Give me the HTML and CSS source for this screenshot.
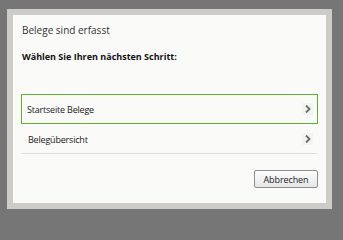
FILE: index.html
```html
<!DOCTYPE html>
<html lang="de">
<head>
<meta charset="utf-8">
<link rel="stylesheet" href="styles.css">
</head>
<body>
<div class="frame">
  <div class="dialog">
    <div class="title">Belege sind erfasst</div>
    <div class="prompt">Wählen Sie Ihren nächsten Schritt:</div>
    <div class="options">
      <div class="option selected">
        <span>Startseite Belege</span>
        <span class="chev"><svg width="6" height="8" viewBox="0 0 6 8"><path d="M1 0.5 L4.5 4 L1 7.5" fill="none" stroke="#6a6a6a" stroke-width="1.8"/></svg></span>
      </div>
      <div class="option last">
        <span>Belegübersicht</span>
        <span class="chev"><svg width="6" height="8" viewBox="0 0 6 8"><path d="M1 0.5 L4.5 4 L1 7.5" fill="none" stroke="#6a6a6a" stroke-width="1.8"/></svg></span>
      </div>
    </div>
    <div class="actions">
      <button class="btn">Abbrechen</button>
    </div>
  </div>
</div>
</body>
</html>
```
FILE: styles.css
```css
html, body {
  margin: 0;
  padding: 0;
  background: #767676;
  width: 343px;
  height: 230px;
  overflow: hidden;
}
body {
  font-family: "Open Sans", "Noto Sans", sans-serif;
  font-size: 9px;
  color: #222;
}
.frame {
  margin: 9px 0 0 7px;
  width: 313px;
  height: 188px;
  border: 6px solid #cdccc9;
  background: #fafaf8;
}
.dialog {
  padding: 0 8px 0 8px;
  display: flex;
  flex-direction: column;
}
.title {
  margin-top: 8px;
  margin-left: 1px;
  color: #333;
  line-height: 14px;
  font-size: 10px;
}
.prompt {
  margin-top: 13px;
  margin-left: 1px;
  font-weight: bold;
  color: #111;
  line-height: 14px;
  font-size: 9px;
}
.options {
  margin-top: 30px;
  display: flex;
  flex-direction: column;
}
.option {
  height: 28px;
  display: flex;
  align-items: center;
  justify-content: space-between;
  padding: 0 4px 0 5px;
  border: 1px solid transparent;
  color: #1a1a1a;
  letter-spacing: -0.2px;
}
.option.selected {
  border-color: #5ab52a;
}
.option.last {
  border-bottom: 1px solid #e0e0de;
  padding-left: 6px;
}
.chev {
  width: 11px;
  height: 12px;
  display: flex;
  align-items: center;
  justify-content: center;
  background: #f3f3f1;
}
.chev svg {
  display: block;
}
.actions {
  display: flex;
  justify-content: flex-end;
  margin-top: 16px;
}
.btn {
  width: 64px;
  height: 18px;
  padding: 0;
  font-family: inherit;
  font-size: 9px;
  letter-spacing: -0.1px;
  color: #222;
  border: 1px solid #8e8e8e;
  border-radius: 2px;
  background: linear-gradient(#fdfdfd, #e6e6e6);
}
```
